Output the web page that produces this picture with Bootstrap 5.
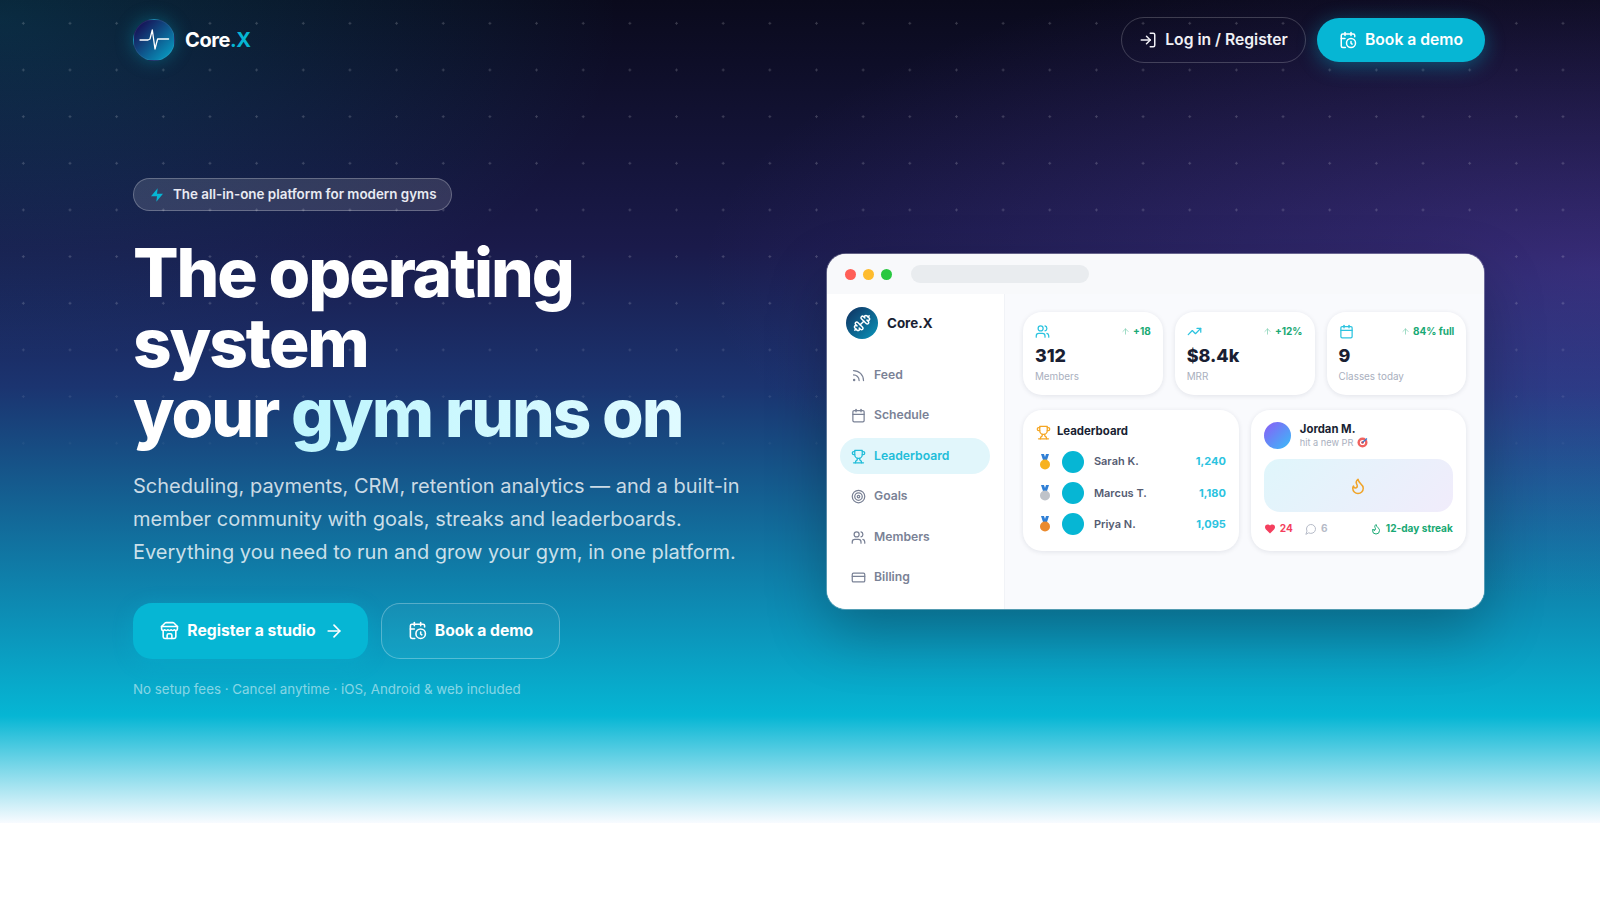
<!DOCTYPE html>
<html lang="en">
<head>
<meta charset="utf-8">
<title>Core.X</title>
<link href="https://cdn.jsdelivr.net/npm/bootstrap@5.3.0/dist/css/bootstrap.min.css" rel="stylesheet">
<style>
body{font-family:Inter,"Liberation Sans",sans-serif;background:#fff;min-height:900px;}
svg.ic{fill:none;stroke:currentColor;stroke-width:2;stroke-linecap:round;stroke-linejoin:round;flex:none;}
.hero{position:relative;height:823px;overflow:hidden;
 background:
  radial-gradient(ellipse 900px 330px at 1600px 270px,rgba(139,92,246,.25),rgba(139,92,246,0) 100%),
  radial-gradient(ellipse 620px 340px at 0px 20px,rgba(6,182,212,.19),rgba(6,182,212,0) 100%),
  linear-gradient(180deg,#0a0a1c 0%,#1a1a4a 30%,#1b3470 47%,#06b6d4 87%,#f8fbff 100%);}
.hero-dots{position:absolute;inset:0;background-image:radial-gradient(circle at center,rgba(255,255,255,.18) 1px,transparent 1.4px);background-size:46.667px 46.667px;background-position:0 0;-webkit-mask-image:linear-gradient(180deg,#000 0,#000 36%,transparent 60%);mask-image:linear-gradient(180deg,#000 0,#000 36%,transparent 60%);}
.hero-inner{position:relative;padding-left:133px;padding-right:115px;}
.top-nav{padding:17px 0 0;height:64px;align-items:flex-start;flex-wrap:nowrap;}
.top-nav .navbar-brand{margin-top:2px!important;}
.brand-mark{width:42px;height:42px;border-radius:50%;background:linear-gradient(135deg,#15175a 15%,#06a8cc);box-shadow:0 0 18px rgba(6,182,212,.35);color:#fff;border:1px solid rgba(255,255,255,.08);}
.brand-name{font-size:20px;font-weight:700;color:#fff;letter-spacing:-.02em;margin-left:2px;}
.brand-name span{color:#06b6d4;margin-left:0;}
.btn-hero{font-weight:600;font-size:15.7px;color:#fff;display:inline-flex;align-items:center;gap:8px;}
.btn-login{height:46px;width:185px;justify-content:center;border:1.2px solid rgba(255,255,255,.2);color:#f0f0f5;background:transparent;}
.btn-demo{height:44px;width:168px;justify-content:center;background:#06b6d4;border:0;box-shadow:0 4px 20px rgba(6,182,212,.4);}
.top-actions{gap:11px;align-items:center;}
.hero-body{margin-top:114px;gap:51px;align-items:flex-start;}
.hero-left{width:643px;flex:none;}
.pill-note{height:33px;width:319px;border:1px solid rgba(255,255,255,.25);background:rgba(255,255,255,.13);font-size:13.4px;font-weight:600;color:#e8eaf2;gap:8px;padding-left:15px;}
.pill-note svg{color:#06b6d4;fill:#06b6d4;stroke:none;}
.hero-title{font-size:67.4px;line-height:69.8px;font-weight:800;letter-spacing:-.03em;color:#fff;margin:27px 0 0;}
.hero-title em{font-style:normal;background:linear-gradient(90deg,#bdf5fd,#e0fbff);-webkit-background-clip:text;background-clip:text;color:transparent;}
.hero-lead{font-size:20px;line-height:32.7px;color:rgba(255,255,255,.78);margin:23px 0 0;white-space:nowrap;}
.cta-row{margin-top:34px;gap:13px;}
.btn-cta{height:56px;border-radius:19px;font-size:15.7px;font-weight:700;color:#fff;display:inline-flex;align-items:center;justify-content:center;gap:8px;}
.btn-cta-main{width:235px;background:#06b6d4;border:0;padding-left:15px;box-shadow:0 4px 20px rgba(6,182,212,.3);}
.btn-cta-alt{width:179px;background:rgba(255,255,255,.04);border:1.2px solid rgba(255,255,255,.28);}
.hero-note{font-size:13.35px;color:rgba(255,255,255,.52);margin:20px 0 0;}
.app-win{width:657px;height:355px;margin-top:76px;border-radius:19px;background:#fff;overflow:hidden;flex:none;box-shadow:0 0 0 1px rgba(255,255,255,.3),0 24px 60px rgba(0,0,0,.25);}
.win-bar{height:40px;background:#f8f9fb;padding-left:18px;gap:7px;}
.win-dot{width:11px;height:11px;border-radius:50%;}
.win-url{width:178px;height:18px;border-radius:9px;background:#e9ecef;margin-left:12px;}
.win-side{width:177.5px;height:315px;padding:13px 14px 13px 13px;background:#fff;border-right:1px solid #f1f3f7;flex:none;}
.side-logo{width:32px;height:32px;border-radius:50%;background:linear-gradient(135deg,#102e5e,#0a96bb);color:#fff;}
.side-name{font-size:13.4px;font-weight:700;color:#1a1f33;}
.side-top{padding-left:6px;gap:9px;margin-bottom:18px;}
.side-link{height:36.3px;padding:0 11px;border-radius:18px;gap:8px;font-size:12.2px;font-weight:600;color:#7a8296;margin-bottom:4.2px;}
.side-link.on{background:#e1f6fb;color:#22bdd9;}
.win-main{flex:1;background:#f9fafd;padding:18px 17.7px 18px 18.4px;min-width:0;}
.tile{background:#fff;border-radius:19px;box-shadow:0 1px 5px rgba(20,30,60,.1);}
.stat-row{gap:12px;margin-bottom:15px;}
.stat{flex:1;height:83px;padding:10px 12px;}
.stat-top{height:18px;}
.stat-trend{font-size:10px;font-weight:700;color:#19a974;gap:3px;}
.stat-trend svg{opacity:.55;}
.stat-ic{color:#2cc3df;}
.stat-val{font-size:17.9px;font-weight:800;color:#1a1f33;line-height:24px;margin-top:4px;}
.stat-lab{font-size:9.9px;color:#a9afbe;margin-top:2px;line-height:13px;}
.duo{gap:12px;}
.duo>.tile{flex:1;height:141px;}
.lead-tile{padding:13px 13px 13px 14px;}
.lead-head{font-size:11.4px;font-weight:700;color:#1a1f33;gap:6px;height:18px;margin:0 0 5px -1px;}
.lead-row{height:31.2px;font-size:11px;font-weight:600;color:#555c72;padding-left:2px;}
.lead-row .who{width:22px;height:22px;border-radius:50%;background:#06b6d4;margin:0 10px 0 11px;}
.lead-row b{margin-left:auto;color:#2cc3df;font-weight:700;}
.post-tile{padding:12px 13.5px 12px 13px;}
.post-av{width:27px;height:27px;border-radius:50%;background:linear-gradient(135deg,#8b5cf6,#38bdf8);margin-right:1px;}
.post-name{font-size:11.3px;font-weight:700;color:#1a1f33;line-height:14px;}
.post-sub{font-size:9.2px;color:#a9afbe;line-height:13px;}
.post-img{height:53px;border-radius:16px;background:linear-gradient(135deg,#dff6fb,#f1ecfb);color:#f0a429;margin:10px 0 9px;}
.post-foot{font-size:10.1px;font-weight:700;gap:4px;}
</style>
</head>
<body>
<section class="hero">
 <div class="hero-dots"></div>
 <div class="hero-inner">
  <nav class="navbar top-nav">
   <a class="navbar-brand d-flex align-items-center gap-2 m-0 p-0" href="#">
    <span class="brand-mark d-flex align-items-center justify-content-center">
     <svg class="ic" width="32" height="24" viewBox="0 0 32 24" style="stroke-width:1.3"><path d="M2 12h8l2-1 2.3-9 2.7 19 2.6-10h11"/></svg>
    </span>
    <span class="brand-name">Core<span>.X</span></span>
   </a>
   <div class="d-flex top-actions">
    <a href="#" class="btn rounded-pill btn-hero btn-login">
     <svg class="ic" width="18" height="18" viewBox="0 0 24 24"><path d="M15 3h4a2 2 0 0 1 2 2v14a2 2 0 0 1-2 2h-4"/><polyline points="10 17 15 12 10 7"/><line x1="15" y1="12" x2="3" y2="12"/></svg>
     Log in / Register</a>
    <a href="#" class="btn rounded-pill btn-hero btn-demo">
     <svg class="ic" width="18" height="18" viewBox="0 0 24 24"><path d="M21 7.5V6a2 2 0 0 0-2-2H5a2 2 0 0 0-2 2v14a2 2 0 0 0 2 2h3.5"/><path d="M16 2v4"/><path d="M8 2v4"/><path d="M3 10h5"/><path d="M17.5 17.5 16 16.3V14"/><circle cx="16" cy="16" r="6"/></svg>
     Book a demo</a>
   </div>
  </nav>
  <div class="d-flex hero-body">
   <div class="hero-left">
    <div class="pill-note d-inline-flex align-items-center rounded-pill">
     <svg width="16" height="16" viewBox="0 0 24 24"><path d="M13 2 3 14h9l-1 8 10-12h-9l1-8z"/></svg>
     The all-in-one platform for modern gyms</div>
    <h1 class="hero-title">The operating<br>system<br>your <em>gym runs on</em></h1>
    <p class="hero-lead">Scheduling, payments, CRM, retention analytics — and a built-in<br>member community with goals, streaks and leaderboards.<br>Everything you need to run and grow your gym, in one platform.</p>
    <div class="d-flex cta-row">
     <a href="#" class="btn btn-cta btn-cta-main">
      <svg class="ic" width="19" height="19" viewBox="0 0 24 24"><path d="m2 7 4.41-4.41A2 2 0 0 1 7.83 2h8.34a2 2 0 0 1 1.42.59L22 7"/><path d="M4 12v8a2 2 0 0 0 2 2h12a2 2 0 0 0 2-2v-8"/><path d="M15 22v-4a2 2 0 0 0-2-2h-2a2 2 0 0 0-2 2v4"/><path d="M2 7h20"/><path d="M22 7v3a2 2 0 0 1-2 2a2.7 2.7 0 0 1-1.59-.63.7.7 0 0 0-.82 0A2.7 2.7 0 0 1 16 12a2.7 2.7 0 0 1-1.59-.63.7.7 0 0 0-.82 0A2.7 2.7 0 0 1 12 12a2.7 2.7 0 0 1-1.59-.63.7.7 0 0 0-.82 0A2.7 2.7 0 0 1 8 12a2.7 2.7 0 0 1-1.59-.63.7.7 0 0 0-.82 0A2.7 2.7 0 0 1 4 12a2 2 0 0 1-2-2V7"/></svg>
      Register a studio
      <svg class="ic" width="20" height="20" viewBox="0 0 24 24"><path d="M5 12h14"/><path d="m12 5 7 7-7 7"/></svg>
     </a>
     <a href="#" class="btn btn-cta btn-cta-alt">
      <svg class="ic" width="19" height="19" viewBox="0 0 24 24"><path d="M21 7.5V6a2 2 0 0 0-2-2H5a2 2 0 0 0-2 2v14a2 2 0 0 0 2 2h3.5"/><path d="M16 2v4"/><path d="M8 2v4"/><path d="M3 10h5"/><path d="M17.5 17.5 16 16.3V14"/><circle cx="16" cy="16" r="6"/></svg>
      Book a demo</a>
    </div>
    <p class="hero-note">No setup fees · Cancel anytime · iOS, Android &amp; web included</p>
   </div>
   <div class="app-win">
    <div class="win-bar d-flex align-items-center">
     <span class="win-dot" style="background:#ff5f57"></span>
     <span class="win-dot" style="background:#febc2e"></span>
     <span class="win-dot" style="background:#28c840"></span>
     <span class="win-url"></span>
    </div>
    <div class="d-flex">
     <aside class="win-side">
      <div class="side-top d-flex align-items-center">
       <span class="side-logo d-flex align-items-center justify-content-center">
        <svg class="ic" width="18" height="18" viewBox="0 0 24 24" style="transform:rotate(90deg)"><path d="M14.4 14.4 9.6 9.6"/><path d="M18.657 21.485a2 2 0 1 1-2.829-2.828l-1.767 1.768a2 2 0 1 1-2.829-2.829l6.364-6.364a2 2 0 1 1 2.829 2.829l-1.768 1.767a2 2 0 1 1 2.828 2.829z"/><path d="m21.5 21.5-1.4-1.4"/><path d="M3.9 3.9 2.5 2.5"/><path d="M6.404 12.768a2 2 0 1 1-2.829-2.829l1.768-1.767a2 2 0 1 1-2.828-2.829l2.828-2.828a2 2 0 1 1 2.829 2.828l1.767-1.768a2 2 0 1 1 2.829 2.829z"/></svg>
       </span>
       <span class="side-name">Core.X</span>
      </div>
      <div class="side-link d-flex align-items-center"><svg class="ic" width="15" height="15" viewBox="0 0 24 24"><path d="M4 11a9 9 0 0 1 9 9"/><path d="M4 4a16 16 0 0 1 16 16"/><circle cx="5" cy="19" r="1"/></svg>Feed</div>
      <div class="side-link d-flex align-items-center"><svg class="ic" width="15" height="15" viewBox="0 0 24 24"><rect x="3" y="4" width="18" height="18" rx="2"/><path d="M16 2v4"/><path d="M8 2v4"/><path d="M3 10h18"/></svg>Schedule</div>
      <div class="side-link on d-flex align-items-center"><svg class="ic" width="15" height="15" viewBox="0 0 24 24"><path d="M6 9H4.5a2.5 2.5 0 0 1 0-5H6"/><path d="M18 9h1.5a2.5 2.5 0 0 0 0-5H18"/><path d="M4 22h16"/><path d="M10 14.66V17c0 .55-.47.98-.97 1.21C7.85 18.75 7 20.24 7 22"/><path d="M14 14.66V17c0 .55.47.98.97 1.21C16.15 18.75 17 20.24 17 22"/><path d="M18 2H6v7a6 6 0 0 0 12 0V2Z"/></svg>Leaderboard</div>
      <div class="side-link d-flex align-items-center"><svg class="ic" width="15" height="15" viewBox="0 0 24 24"><circle cx="12" cy="12" r="10"/><circle cx="12" cy="12" r="6"/><circle cx="12" cy="12" r="2"/></svg>Goals</div>
      <div class="side-link d-flex align-items-center"><svg class="ic" width="15" height="15" viewBox="0 0 24 24"><path d="M16 21v-2a4 4 0 0 0-4-4H6a4 4 0 0 0-4 4v2"/><circle cx="9" cy="7" r="4"/><path d="M22 21v-2a4 4 0 0 0-3-3.87"/><path d="M16 3.13a4 4 0 0 1 0 7.75"/></svg>Members</div>
      <div class="side-link d-flex align-items-center"><svg class="ic" width="15" height="15" viewBox="0 0 24 24"><rect x="2" y="5" width="20" height="14" rx="2"/><line x1="2" y1="10" x2="22" y2="10"/></svg>Billing</div>
     </aside>
     <div class="win-main">
      <div class="d-flex stat-row">
       <div class="tile stat">
        <div class="stat-top d-flex justify-content-between align-items-center">
         <svg class="ic stat-ic" width="15" height="15" viewBox="0 0 24 24"><path d="M16 21v-2a4 4 0 0 0-4-4H6a4 4 0 0 0-4 4v2"/><circle cx="9" cy="7" r="4"/><path d="M22 21v-2a4 4 0 0 0-3-3.87"/><path d="M16 3.13a4 4 0 0 1 0 7.75"/></svg>
         <span class="stat-trend d-flex align-items-center"><svg class="ic" width="9" height="9" viewBox="0 0 24 24"><path d="m5 12 7-7 7 7"/><path d="M12 19V5"/></svg>+18</span>
        </div>
        <div class="stat-val">312</div><div class="stat-lab">Members</div>
       </div>
       <div class="tile stat">
        <div class="stat-top d-flex justify-content-between align-items-center">
         <svg class="ic stat-ic" width="15" height="15" viewBox="0 0 24 24"><polyline points="22 7 13.5 15.5 8.5 10.5 2 17"/><polyline points="16 7 22 7 22 13"/></svg>
         <span class="stat-trend d-flex align-items-center"><svg class="ic" width="9" height="9" viewBox="0 0 24 24"><path d="m5 12 7-7 7 7"/><path d="M12 19V5"/></svg>+12%</span>
        </div>
        <div class="stat-val">$8.4k</div><div class="stat-lab">MRR</div>
       </div>
       <div class="tile stat">
        <div class="stat-top d-flex justify-content-between align-items-center">
         <svg class="ic stat-ic" width="15" height="15" viewBox="0 0 24 24"><rect x="3" y="4" width="18" height="18" rx="2"/><path d="M16 2v4"/><path d="M8 2v4"/><path d="M3 10h18"/></svg>
         <span class="stat-trend d-flex align-items-center"><svg class="ic" width="9" height="9" viewBox="0 0 24 24"><path d="m5 12 7-7 7 7"/><path d="M12 19V5"/></svg>84% full</span>
        </div>
        <div class="stat-val">9</div><div class="stat-lab">Classes today</div>
       </div>
      </div>
      <div class="d-flex duo">
       <div class="tile lead-tile">
        <div class="lead-head d-flex align-items-center"><svg class="ic" width="15" height="15" viewBox="0 0 24 24" style="color:#f5a623"><path d="M6 9H4.5a2.5 2.5 0 0 1 0-5H6"/><path d="M18 9h1.5a2.5 2.5 0 0 0 0-5H18"/><path d="M4 22h16"/><path d="M10 14.66V17c0 .55-.47.98-.97 1.21C7.85 18.75 7 20.24 7 22"/><path d="M14 14.66V17c0 .55.47.98.97 1.21C16.15 18.75 17 20.24 17 22"/><path d="M18 2H6v7a6 6 0 0 0 12 0V2Z"/></svg>Leaderboard</div>
        <div class="lead-row d-flex align-items-center">
         <svg width="12" height="16" viewBox="0 0 12 16"><path d="M2 0h3l1 3 1-3h3L8 6H4z" fill="#2f7fd6"/><circle cx="6" cy="10.5" r="5" fill="#f7b21f"/></svg>
         <span class="who"></span>Sarah K.<b>1,240</b></div>
        <div class="lead-row d-flex align-items-center">
         <svg width="12" height="16" viewBox="0 0 12 16"><path d="M2 0h3l1 3 1-3h3L8 6H4z" fill="#2f7fd6"/><circle cx="6" cy="10.5" r="5" fill="#bfc3c9"/></svg>
         <span class="who"></span>Marcus T.<b>1,180</b></div>
        <div class="lead-row d-flex align-items-center">
         <svg width="12" height="16" viewBox="0 0 12 16"><path d="M2 0h3l1 3 1-3h3L8 6H4z" fill="#2f7fd6"/><circle cx="6" cy="10.5" r="5" fill="#ea8a2e"/></svg>
         <span class="who"></span>Priya N.<b>1,095</b></div>
       </div>
       <div class="tile post-tile">
        <div class="d-flex align-items-center gap-2">
         <span class="post-av"></span>
         <div><div class="post-name">Jordan M.</div>
         <div class="post-sub d-flex align-items-center gap-1">hit a new PR <svg width="11" height="11" viewBox="0 0 11 11"><circle cx="5.5" cy="5.5" r="5" fill="#f0625f"/><circle cx="5.5" cy="5.5" r="2.6" fill="#fff"/><circle cx="5.5" cy="5.5" r="1.3" fill="#e03b3b"/><path d="M5.5 5.5 10 1.5" stroke="#2f7fd6" stroke-width="1.2"/></svg></div></div>
        </div>
        <div class="post-img d-flex align-items-center justify-content-center"><svg class="ic" width="18" height="18" viewBox="0 0 24 24"><path d="M8.5 14.5A2.5 2.5 0 0 0 11 12c0-1.38-.5-2-1-3-1.072-2.143-.224-4.054 2-6 .5 2.5 2 4.9 4 6.5 2 1.6 3 3.5 3 5.5a7 7 0 1 1-14 0c0-1.153.433-2.294 1-3a2.5 2.5 0 0 0 2.5 2.5z"/></svg></div>
        <div class="post-foot d-flex align-items-center">
         <svg width="12" height="12" viewBox="0 0 24 24" fill="#f43f5e"><path d="M19 14c1.49-1.46 3-3.21 3-5.5A5.5 5.5 0 0 0 16.5 3c-1.76 0-3 .5-4.5 2-1.5-1.5-2.74-2-4.5-2A5.5 5.5 0 0 0 2 8.5c0 2.3 1.5 4.05 3 5.5l7 7Z"/></svg>
         <span style="color:#f43f5e">24</span>
         <svg class="ic ms-2" width="12" height="12" viewBox="0 0 24 24" style="color:#b5bac7"><path d="M7.9 20A9 9 0 1 0 4 16.1L2 22Z"/></svg>
         <span style="color:#b5bac7">6</span>
         <span class="ms-auto d-flex align-items-center gap-1" style="color:#19a974"><svg class="ic" width="12" height="12" viewBox="0 0 24 24"><path d="M8.5 14.5A2.5 2.5 0 0 0 11 12c0-1.38-.5-2-1-3-1.072-2.143-.224-4.054 2-6 .5 2.5 2 4.9 4 6.5 2 1.6 3 3.5 3 5.5a7 7 0 1 1-14 0c0-1.153.433-2.294 1-3a2.5 2.5 0 0 0 2.5 2.5z"/></svg>12-day streak</span>
        </div>
       </div>
      </div>
     </div>
    </div>
   </div>
  </div>
 </div>
</section>
<script src="https://cdn.jsdelivr.net/npm/bootstrap@5.3.0/dist/js/bootstrap.bundle.min.js"></script>
</body>
</html>
